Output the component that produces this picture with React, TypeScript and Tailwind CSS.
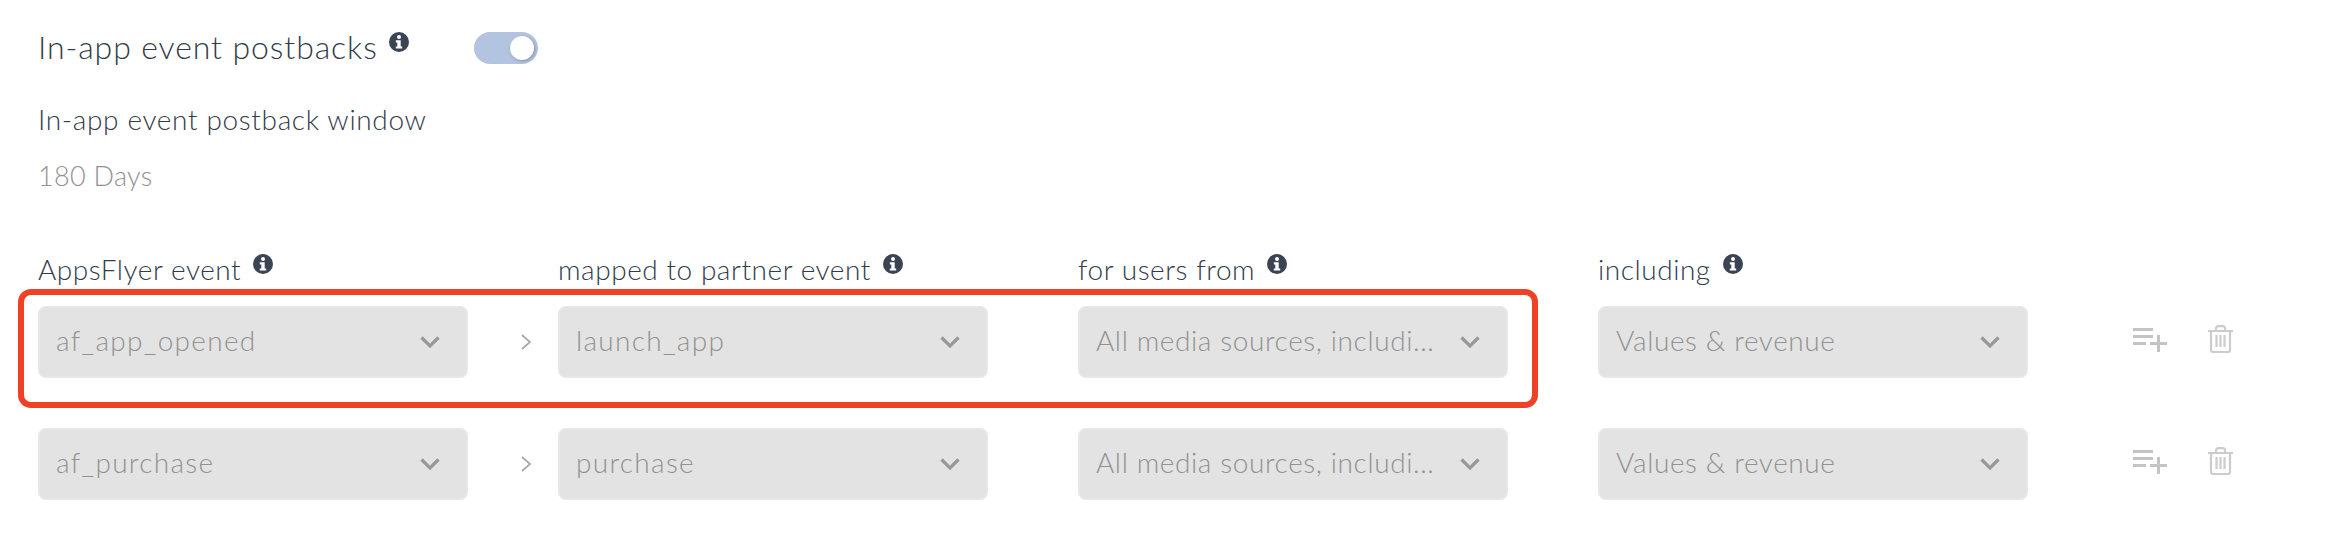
const font = { fontFamily: "Lato, 'Open Sans', sans-serif" };

function Info({ className = "" }: { className?: string }) {
  return (
    <svg viewBox="0 0 20 20" className={"w-[20px] h-[20px] shrink-0 " + className}>
      <circle cx="10" cy="10" r="10" fill="#3a4452" />
      <circle cx="10" cy="5" r="2" fill="#fff" />
      <path d="M6.8 8.2h4.9v6.2h1.5v2.2H6.8v-2.2h1.5v-4H6.8z" fill="#fff" />
    </svg>
  );
}

function Chevron() {
  return (
    <svg viewBox="0 0 20 12" className="w-[20px] h-[12px] shrink-0" fill="none" stroke="#999" strokeWidth="3.2">
      <path d="M1.5 1.5 10 10l8.5-8.5" />
    </svg>
  );
}

function Select({ text, wide }: { text: string; wide?: boolean }) {
  return (
    <div className="w-[430px] h-[72px] shrink-0 rounded-[8px] bg-[#e3e3e3] border-2 border-[#e5e7ea] flex items-center pl-[16px] pr-[26px] gap-[18px]">
      <span
        className={
          "flex-1 min-w-0 whitespace-nowrap text-[#929292] text-[28px] font-light leading-[40px] -mt-[5px] " +
          (wide ? "tracking-[1.3px]" : "tracking-[0.6px]")
        }
      >
        {text}
      </span>
      <Chevron />
    </div>
  );
}

function Arrow() {
  return (
    <div className="w-[90px] shrink-0 flex items-center pl-[53px]">
      <svg viewBox="0 0 10 16" className="w-[10px] h-[16px]" fill="none" stroke="#a8a8a8" strokeWidth="1.8">
        <path d="M1 1l8 7-8 7" />
      </svg>
    </div>
  );
}

function Actions() {
  return (
    <div className="flex items-start pt-[19px] pl-[105px] gap-[41px]">
      <svg viewBox="0 0 34 24" className="w-[34px] h-[24px] mt-[3px]" fill="#c4c4c4">
        <rect x="0" y="0" width="20" height="3" />
        <rect x="0" y="7" width="20" height="3" />
        <rect x="0" y="14" width="13" height="3" />
        <rect x="17" y="14" width="17" height="3" />
        <rect x="24" y="7" width="3" height="17" />
      </svg>
      <svg viewBox="0 0 25 28" className="w-[25px] h-[28px]" fill="none" stroke="#cccccc" strokeWidth="2.2">
        <path d="M0 6h25M8 6V3.5C8 2 9 1.2 10.5 1.2h4C16 1.2 17 2 17 3.5V6" />
        <path d="M3 6v19c0 1.2.8 2 2 2h15c1.2 0 2-.8 2-2V6" />
        <path d="M8.5 10v12M12.5 10v12M16.5 10v12" />
      </svg>
    </div>
  );
}

function Row({ a, b, marked }: { a: string; b: string; marked?: boolean }) {
  return (
    <div className="relative flex h-[72px]">
      <Select text={a} wide />
      <Arrow />
      <Select text={b} wide />
      <div className="w-[90px] shrink-0" />
      <Select text="All media sources, includi..." />
      <div className="w-[90px] shrink-0" />
      <Select text="Values & revenue" />
      <Actions />
      {marked && (
        <div className="absolute left-[-20px] top-[-17px] w-[1520px] h-[119px] rounded-[13px] border-[6px] border-[#ee4126]" />
      )}
    </div>
  );
}

function Head({ text }: { text: string }) {
  return (
    <div className="w-[430px] mr-[90px] shrink-0 flex items-start">
      <span className="text-[#323c49] text-[28px] tracking-[0.55px] font-light leading-[36px] -mt-[3px]">{text}</span>
      <Info className="ml-[12px]" />
    </div>
  );
}

export default function App() {
  return (
    <div style={font} className="w-[2336px] h-[542px] overflow-hidden bg-white pl-[38px] pt-[32px]">
      <div className="flex items-start h-[32px]">
        <span className="w-[338px] whitespace-nowrap text-[#323c49] text-[32px] tracking-[0.9px] font-light leading-[32px] -mt-[1px]">In-app event postbacks</span>
        <Info className="ml-[13px]" />
        <div className="ml-[65px] w-[64px] h-[32px] rounded-full bg-[#b3c4e0] flex items-center justify-end pr-[4px]">
          <div className="w-[24px] h-[24px] rounded-full bg-white shadow-[1px_1px_3px_rgba(50,70,110,0.4)]" />
        </div>
      </div>
      <div className="mt-[37px] text-[#323c49] text-[28px] tracking-[0.65px] font-light leading-[36px]">In-app event postback window</div>
      <div className="mt-[21px] text-[#929292] text-[27px] tracking-[0.3px] font-light leading-[36px]">180 Days</div>
      <div className="flex mt-[60px] h-[40px]">
        <Head text="AppsFlyer event" />
        <Head text="mapped to partner event" />
        <Head text="for users from" />
        <Head text="including" />
      </div>
      <div className="mt-[12px] flex flex-col gap-[50px]">
        <Row a="af_app_opened" b="launch_app" marked />
        <Row a="af_purchase" b="purchase" />
      </div>
    </div>
  );
}
